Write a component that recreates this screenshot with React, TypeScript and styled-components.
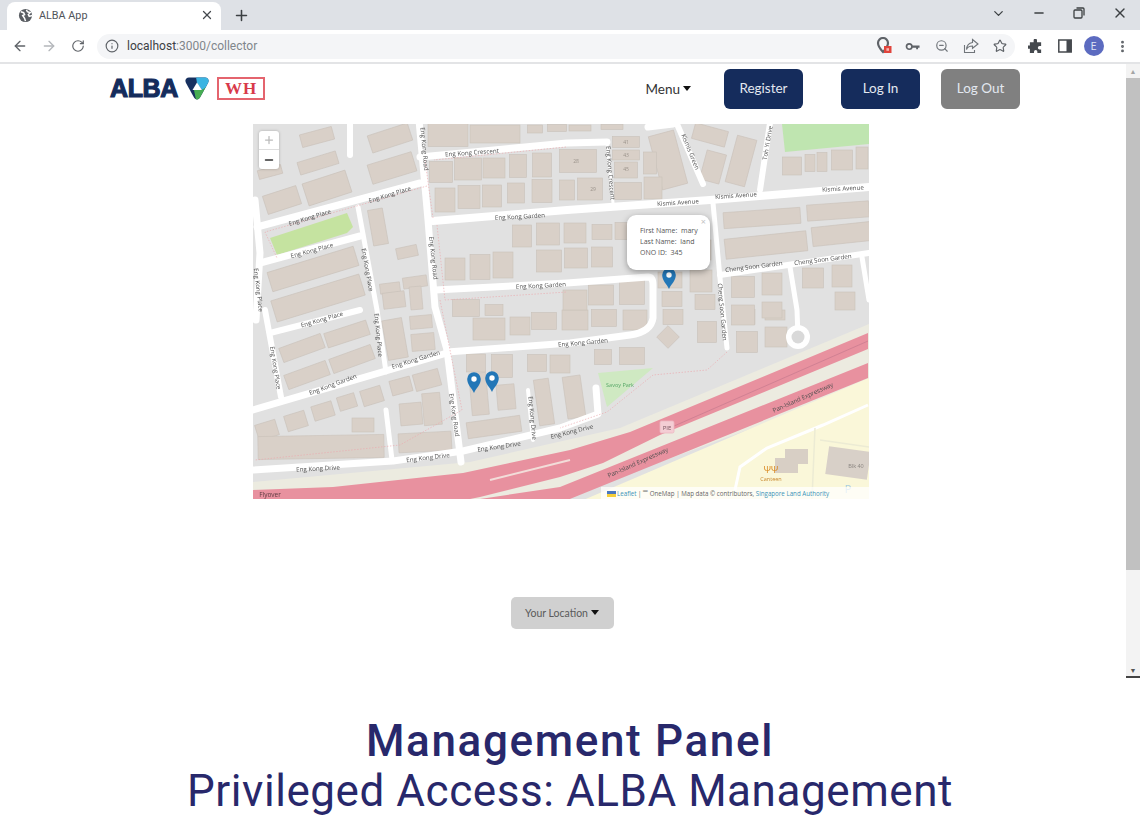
import React from "react";
import styled, { createGlobalStyle } from "styled-components";
import { ArrowLeft, ArrowRight, RotateCw, Info, X, Plus, Minus, ChevronDown, ZoomOut, Star, MoreVertical } from "lucide-react";

const Global = createGlobalStyle`
  html, body { margin: 0; padding: 0; background: #fff; overflow: hidden; }
  #root { width: 1140px; height: 822px; }
  * { box-sizing: border-box; }
`;
const Page = styled.div`width:1140px;height:822px;overflow:hidden;display:flex;flex-direction:column;font-family:"Noto Sans",sans-serif;background:#fff;`;
const TabStrip = styled.div`height:30px;background:#dee1e6;display:flex;align-items:flex-end;padding-left:7px;`;
const Tab = styled.div`width:214px;height:28px;background:#fff;border-radius:8px 8px 0 0;display:flex;align-items:center;padding:0 7px 2px 11px;gap:6px;color:#45494e;font-size:11px;`;
const TabTitle = styled.span`flex:1;font-family:"Roboto",sans-serif;font-size:10.8px;color:#50545a;`;
const NewTab = styled.div`width:40px;height:30px;display:flex;align-items:center;justify-content:center;color:#3c4043;`;
const WindowControls = styled.div`margin-left:auto;display:flex;height:30px;padding-bottom:4px;`;
const WindowButton = styled.div`width:40.5px;display:flex;align-items:center;justify-content:center;color:#3c4043;`;
const Toolbar = styled.div`height:34px;padding:2px 0 2px 5px;display:flex;align-items:center;background:#fff;border-bottom:2px solid #e3e4e6;`;
const ToolIcon = styled.div<{ $muted?: boolean; $first?: boolean }>`width:29px;height:28px;flex:none;display:flex;align-items:center;justify-content:center;margin-left:${p => (p.$first ? "6px" : "0")};color:${p => (p.$muted ? "#b4b7bb" : "#5f6368")};`;
const Omnibox = styled.div`margin-left:5px;width:918px;height:25px;border-radius:13px;background:#f4f5f7;display:flex;align-items:center;padding-left:8px;gap:8px;color:#5f6368;`;
const Url = styled.span`font-family:"Roboto",sans-serif;font-size:12px;color:#80868b;`;
const Host = styled.span`color:#3c4043;`;
const OmniActions = styled.div`margin-left:auto;display:flex;padding-right:1px;`;
const Avatar = styled.div`width:20px;height:20px;border-radius:50%;background:#5c6bc0;color:#dfe3f5;font-size:10px;display:flex;align-items:center;justify-content:center;font-family:"Roboto",sans-serif;`;
const Viewport = styled.div`height:614px;display:flex;flex:none;`;
const Content = styled.main`width:1126px;display:flex;flex-direction:column;align-items:center;`;
const Scrollbar = styled.div`width:14px;background:#f3f3f3;display:flex;flex-direction:column;align-items:center;border-bottom:2px solid #444;`;
const ScrollArrow = styled.div`height:14px;display:flex;align-items:center;justify-content:center;font-size:7px;color:#a5a5a5;`;
const ScrollArrowDown = styled(ScrollArrow)`color:#555;height:12px;`;
const Thumb = styled.div`width:14px;height:492px;background:#c1c1c1;`;
const ScrollRest = styled.div`flex:1;`;
const Nav = styled.nav`width:100%;display:flex;align-items:center;padding:5px 106px 0 110px;`;
const Logo = styled.div`display:flex;align-items:center;margin-top:-2px;`;
const LogoWord = styled.span`font-family:"Liberation Sans",sans-serif;font-weight:700;font-size:25px;letter-spacing:-.4px;color:#142c5c;-webkit-text-stroke:1.2px #142c5c;width:75px;white-space:nowrap;`;
const WhBox = styled.div`margin-left:8px;width:48px;height:23px;border:2px solid #e4646e;padding-top:1px;display:flex;align-items:center;justify-content:center;font-family:"Liberation Serif",serif;font-weight:700;font-size:17px;letter-spacing:.8px;color:#d83a4a;`;
const MenuLink = styled.div`margin-left:auto;color:#333;font-family:"Lato",sans-serif;font-size:13.5px;display:flex;align-items:center;gap:3px;padding-bottom:1px;`;
const Caret = styled.span`display:inline-block;width:0;height:0;border-left:4.5px solid transparent;border-right:4.5px solid transparent;border-top:5px solid #111;`;
const NavButton = styled.button<{ $grey?: boolean; $left: number }>`margin-left:${p => p.$left}px;width:79px;height:40px;border:none;border-radius:6px;background:${p => (p.$grey ? "#808080" : "#152c5c")};color:#e3e8f0;font-family:"Lato",sans-serif;font-size:13.5px;padding:0 0 2px;`;
const MapFrame = styled.div`position:relative;margin:15px 4px 0 0;width:616px;height:375px;overflow:hidden;flex:none;background:#e0e0e0;`;
const MapSvg = styled.svg`display:block;filter:blur(.45px);`;
const ZoomBox = styled.div`position:absolute;left:6px;top:7px;width:20px;height:38px;background:#fff;border-radius:3px;box-shadow:0 0 3px rgba(0,0,0,.25);display:flex;flex-direction:column;`;
const ZoomCell = styled.div<{ $off?: boolean }>`height:19px;display:flex;align-items:center;justify-content:center;color:${p => (p.$off ? "#bbb" : "#333")};border-bottom:${p => (p.$off ? "1px solid #ddd" : "none")};`;
const Popup = styled.div`position:absolute;left:374px;top:91px;width:83px;height:55px;background:#fff;border-radius:9px;box-shadow:0 2px 6px rgba(0,0,0,.35);padding:10px 0 0 13px;font-family:"Open Sans",sans-serif;font-size:7px;line-height:11px;color:#555;`;
const PopupClose = styled.span`position:absolute;right:4px;top:1px;font-size:9px;color:#c3c3c3;`;
const Attribution = styled.div`position:absolute;right:0;bottom:0;width:268px;height:12px;padding-left:6px;background:rgba(255,255,255,.72);font-family:"Open Sans",sans-serif;font-size:6.2px;line-height:13px;color:#666;white-space:nowrap;`;
const AttrLink = styled.span`color:#3b93b8;`;
const Flag = styled.span`display:inline-block;width:9px;height:6px;margin-right:1px;vertical-align:-.5px;background:linear-gradient(#4a78c0 50%,#f5cf3a 50%);`;
const LocationButton = styled.button`margin:98px 2px 0 0;width:103px;height:32px;background:#d0d0d0;border:none;border-radius:5px;color:#5a5a5a;font-family:"Lato",sans-serif;font-size:10.5px;display:flex;align-items:center;justify-content:center;gap:3px;padding:0 0 1px;`;
const Headings = styled.section`flex:1;display:flex;flex-direction:column;align-items:center;padding-top:38px;color:#28286b;font-family:"Roboto",sans-serif;`;
const Title = styled.h1`margin:0;font-weight:500;font-size:44px;line-height:50px;letter-spacing:1.65px;white-space:nowrap;`;
const Subtitle = styled.h2`margin:0;font-weight:400;font-size:44px;line-height:50px;letter-spacing:.56px;white-space:nowrap;`;

type R = [number, number, number, number, number?];
// buildings: centre x, centre y, width, height, rotation
const B: R[] = [
  [317,137,33,13,-15],[318,163,40,13,-17],[390,138,42,18,-18],[392,168,46,20,-17],[327,188,45,23,-18],[282,200,35,19,-18],[270,172,24,9,-15],
  [448,135,40,23],[495,134,50,18],[535,129,15,8],[557,128,19,7],[580,128,22,6],[612,127,22,5],
  [441,172,23,21],[468,169,27,22],[494,168,22,20],[518,166,17,23],[542,165,19,24],[578,161,37,23],
  [445,200,20,24],[469,197,22,23],[492,196,19,22],[516,193,17,20],[542,191,20,23],[567,190,15,20],[590,189,25,22],
  [378,227,15,36,-10],[407,252,21,11,-12],[522,236,19,22],[548,234,23,22],[575,233,22,20],[602,232,20,15],[627,231,24,17],
  [549,261,25,22],[576,258,23,20],[602,257,21,20],[455,269,20,22],[480,267,20,25],[503,265,20,26],
  [313,269,90,20,-17],[318,298,92,22,-17],[390,288,20,10,-7],[394,300,22,16,-7],[415,282,24,11,-8],[416,298,12,23,-5],
  [302,348,44,15,-20],[347,334,44,15,-18],[307,375,44,15,-20],[352,359,44,15,-20],[395,339,20,40,-10],[421,322,22,13,-5],[423,342,23,17,-5],
  [401,386,21,15,-15],[427,380,26,17,-15],[372,396,21,16,-17],[347,402,18,14,-17],[323,411,21,15,-17],[296,421,21,16,-17],[267,430,21,16,-17],
  [363,425,22,14],[321,447,126,23,-1],[425,442,53,19,-3],[411,414,22,22,-5],[432,409,18,32,-5],
  [476,363,19,18],[479,394,17,42,-5],[502,366,21,23],[506,397,18,25,-5],[494,427,54,16,-8],[544,402,15,46,-8],[537,363,19,17],[560,364,20,18],[574,397,18,42,-8],
  [489,329,32,22],[520,326,20,18],[544,321,25,17],[466,308,27,17],[494,310,18,11],
  [575,320,26,20],[604,318,25,17],[635,320,24,20],[673,317,20,15],[668,337,16,16,45],[707,332,19,21],[745,317,20,15],[747,342,21,21],[775,315,20,10],[776,337,22,20],
  [603,357,17,15],[632,356,25,17],
  [626,142,27,11],[626,155,27,10],[626,170,23,16],[628,191,27,17],
  [668,160,26,55,-15],[650,163,13,22],[653,188,18,22],[713,167,20,30,15],[741,161,20,48,15],[710,135,34,16,15],
  [792,166,19,18],[810,163,10,17],[822,162,10,19],[842,160,21,20],[862,158,12,22],
  [762,218,77,16,-4],[838,211,62,16,-4],[766,245,82,20,-6],[842,234,60,19,-6],
  [743,287,23,21],[772,284,20,22],[813,278,21,20],[842,276,20,22],[845,301,20,18],[743,315,23,20],[772,310,20,16],
  [670,280,24,16],[672,299,20,15],[701,281,22,22],[705,302,20,15],[601,295,25,20],[632,292,25,25],[575,300,24,20],
  [668,260,16,14],[700,250,22,20],
];
const labels: [string, number, number, number][] = [
  ["Eng Kong Crescent",472,153,-4],["Eng Kong Garden",520,217,-3],["Eng Kong Garden",541,286,-3],["Eng Kong Place",310,218,-17],["Eng Kong Place",390,195,-17],["Eng Kong Place",312,251,-15],
  ["Eng Kong Road",433,258,84],["Eng Kong Place",367,270,80],["Eng Kong Place",258,290,83],["Eng Kong Place",378,335,85],["Eng Kong Place",275,368,81],["Eng Kong Place",322,320,-16],
  ["Eng Kong Garden",333,385,-20],["Eng Kong Garden",416,360,-17],["Eng Kong Road",454,415,82],["Eng Kong Road",424,149,85],["Eng Kong Drive",318,469,-3],["Eng Kong Drive",428,458,-7],["Eng Kong Drive",499,447,-8],["Eng Kong Drive",572,432,-14],["Eng Kong Drive",532,418,85],
  ["Eng Kong Garden",583,343,-5],["Cheng Soon Garden",754,267,-7],["Cheng Soon Garden",823,260,-7],["Cheng Soon Garden",722,312,85],["Kismis Avenue",678,203,-4],["Kismis Avenue",736,196,-4],["Kismis Avenue",843,189,-3],
  ["Eng Kong Crescent",610,173,85],["Kismis Green",690,152,68],["Toh Yi Drive",768,143,-80],["Pan-Island Expressway",803,398,-24],["Pan-Island Expressway",638,463,-24],
];
const roads: [string, number][] = [
  ["M419 120L428 220L435 307L447 350L461 462",7],["M420 157L567 143L607 142",7],["M607 143L613 203",3],["M433 221L567 210L710 200L869 187",8],
  ["M435 290L567 283L648 277Q653 277 653 285L653 318Q651 332 630 335L570 343L447 352",7],["M253 410L447 353",7],["M257 227L420 183",7],["M260 263L360 236",7],["M358 207L377 310L386 372",5],
  ["M265 310L281 397",6],["M270 333L360 310",6],["M255 200L260 253L256 320",7],["M253 470L393 461L463 451L560 428L598 414L596 388",7],["M386 410L392 460",5],["M528 390L533 440",4],
  ["M677 124L703 184",6],["M770 123L760 190",6],["M713 203L723 310L727 348",5],["M720 275L869 253",6],["M790 267L797 310L798 337",5],["M862 257L869 300",5],["M648 127L673 124",7],["M350 120L350 155",6],
];

const Pin = ({ x, y }: { x: number; y: number }) => (
  <g transform={`translate(${x} ${y})`}>
    <path d="M0 0C-2-5-6.8-8-6.8-14A6.8 6.8 0 1 1 6.8-14C6.8-8 2-5 0 0Z" fill="#2377b7" />
    <circle cy={-14} r={2.7} fill="#fff" />
  </g>
);

const MapDrawing = () => (
  <MapSvg width={616} height={375} viewBox="253 124 616 375">
    <rect x={253} y={124} width={616} height={375} fill="#e1e1e1" />
    <path d="M253 482L470 462L620 428L869 324V385L560 499H253Z" fill="#ecebe0" />
    <path d="M560 510L869 378V510Z" fill="#faf7d9" />
    <path d="M782 124H869V144L785 152Z" fill="#bfe5b0" />
    <path d="M270 238L347 213L353 227L347 233L277 255Z" fill="#c5e3a0" />
    <path d="M598 373L653 368L607 407Z" fill="#cfe9c2" />
    {B.map(([x, y, w, h, a], i) => (
      <rect key={i} x={x - w / 2} y={y - h / 2} width={w} height={h} fill="#d9d0c8" stroke="#c9c1b9" strokeWidth={0.6} transform={a ? `rotate(${a} ${x} ${y})` : undefined} />
    ))}
    {roads.map(([d, w], i) => (
      <path key={i} d={d} fill="none" stroke="#fff" strokeWidth={w} strokeLinecap="round" strokeLinejoin="round" />
    ))}
    <circle cx={798} cy={337} r={12} fill="#fff" />
    <circle cx={798} cy={337} r={6.5} fill="#d9d9d9" />
    <g fill="none" stroke="#eba9ae" strokeWidth={1} strokeDasharray="1.5 1.5" opacity={0.65}>
      <path d="M427 186L265 232L277 258M425 160L433 218M566 147L434 160M437 225L445 300L567 292" />
      <path d="M727 352L707 370L653 375L607 412L560 428" />
      <path d="M440 300L462 410L400 445L255 460" />
    </g>
    <path d="M253 490L333 487L463 473L570 450L630 432L868 333V349L660 435L603 463L560 477L480 497L470 499H253Z" fill="#e8919f" />
    <path d="M480 499L560 487L868 363V378L560 503Z" fill="#e8919f" />
    <path d="M490 480L570 460" stroke="#f2ddd9" strokeWidth={2} fill="none" />
    <path d="M665 430L868 341" stroke="#c67a8e" strokeWidth={.7} fill="none" />
    <path d="M868 405L823 425L767 448L740 467L735 490" stroke="#fff" strokeWidth={3} fill="none" />
    <path d="M815 428L812 499M820 440L869 447" stroke="#ecebd4" strokeWidth={1.5} fill="none" />
    <path d="M775 458H785V449H808V464H798V473H775Z" fill="#d8cfc5" />
    <rect x={827} y={449} width={42} height={28} fill="#d8d0c8" transform="rotate(8 848 463)" />
    <g fontFamily="'Open Sans',sans-serif" fontSize={6.2} fill="#4f4f4f" textAnchor="middle">
      {labels.map(([t, x, y, a], i) => (
        <text key={i} x={x} y={y} transform={`rotate(${a} ${x} ${y})`} dominantBaseline="middle">{t}</text>
      ))}
      <text x={620} y={387} fill="#58a868" fontSize={5.5}>Savoy Park</text>
      <text x={771} y={481} fill="#c8872c" fontSize={5.5}>Canteen</text>
      <text x={771} y={473} fill="#d8861c" fontSize={9}>ΨΨ</text>
      <text x={856} y={468} fill="#8a8580" fontSize={5.5}>Blk 40</text>
      <text x={576} y={163} fill="#9a928a" fontSize={5}>28</text>
      <text x={593} y={191} fill="#9a928a" fontSize={5}>29</text>
      <text x={626} y={144} fill="#9a928a" fontSize={5}>41</text>
      <text x={626} y={157} fill="#9a928a" fontSize={5}>43</text>
      <text x={626} y={171} fill="#9a928a" fontSize={5}>45</text>
      <text x={270} y={497} fontSize={6.5} fill="#5c3a40">Flyover</text>
      <text x={848} y={493} fontSize={11} fill="#a8cde0">P</text>
    </g>
    <rect x={660} y={421} width={14} height={12} rx={1.5} fill="#f4cdd4" stroke="#eeb6c0" strokeWidth={.8} />
    <text x={667} y={429.5} fontSize={6} fontFamily="'Open Sans',sans-serif" fill="#7a5560" textAnchor="middle">PIE</text>
    <Pin x={474} y={393} />
    <Pin x={492} y={392} />
    <Pin x={669} y={289} />
  </MapSvg>
);

const Globe = () => (
  <svg width="15" height="15" viewBox="0 0 16 16"><circle cx="8" cy="8" r="7" fill="#5a5e63" /><path d="M3 4l3 1 1 2-2 1 2 3 1 3M9 2l1 2 3 1-2 2 1 2 3-1" fill="none" stroke="#fff" strokeWidth="1.6" /></svg>
);
const Blocked = () => (
  <svg width="16" height="18" viewBox="0 0 16 18"><path d="M7 1a5 5 0 0 0-5 5c0 3.6 5 9 5 9s5-5.4 5-9a5 5 0 0 0-5-5z" fill="none" stroke="#5f6368" strokeWidth="2.2" /><rect x="8" y="9" width="7.5" height="7" fill="#e0443c" /><rect x="10.4" y="11.2" width="2.6" height="2.6" fill="#f7b7b0" /></svg>
);
const KeyIcon = () => (
  <svg width="15" height="15" viewBox="0 0 16 16"><circle cx="4.5" cy="8" r="2.9" fill="none" stroke="#5f6368" strokeWidth="1.8" /><path d="M7.5 7h8v2.2h-1.6v1.6h-2V9.2H7.5z" fill="#5f6368" /></svg>
);
const ShareIcon = () => (
  <svg width="16" height="16" viewBox="0 0 16 16" fill="none" stroke="#70757a" strokeWidth="1.1"><path d="M1.5 7v7.5h10V12" /><path d="M9.5 1.5L15 6l-5.500 4.300V8C6.500 8 4.500 9 3.500 11.500c.3-4 2.500-6.500 6-7z" /></svg>
);
const Puzzle = () => (
  <svg width="15" height="15" viewBox="0 0 16 16"><path d="M6 1.500a1.800 1.800 0 0 1 3.600 0V3.500H14v4h-1.700a1.800 1.800 0 0 0 0 3.600H14V15H10v-1.500a1.800 1.800 0 0 0-3.600 0V15H2v-4.500H.8a1.800 1.800 0 0 1 0-3.600H2V3.500h4z" fill="#45494e" /></svg>
);
const SidePanel = () => (
  <svg width="14" height="14" viewBox="0 0 14 14"><rect x=".8" y="1" width="12.400" height="12" fill="none" stroke="#45494e" strokeWidth="1.500" /><rect x="8.500" y="1" width="4.700" height="12" fill="#45494e" /></svg>
);
const Restore = () => (
  <svg width="12" height="12" viewBox="0 0 12 12" fill="none" stroke="#3c4043" strokeWidth="1.300"><rect x="1" y="3" width="8" height="8" rx="1" /><path d="M3.500 1h6.500a1 1 0 0 1 1 1v6.500" /></svg>
);
const Shield = () => (
  <svg width="24" height="23" viewBox="0 0 24 23">
    <defs>
      <clipPath id="shieldOutline"><path d="M4 .5H20C23 .5 24.500 3 23 6L15 20.500C13.500 23 10.500 23 9 20.500L1 6C-.5 3 1 .5 4 .5Z" /></clipPath>
    </defs>
    <g clipPath="url(#shieldOutline)">
      <rect width="24" height="23" fill="#17305f" />
      <path d="M11 0H24V9L17 13L12 6Z" fill="#3cb4e2" />
      <path d="M9 13H17L24 8V23H11Z" fill="#46ad52" />
      <path d="M12 5.500L17 13H7.500Z" fill="#fff" />
    </g>
  </svg>
);

export default function App() {
  return (
    <Page>
      <Global />
      <TabStrip>
        <Tab>
          <Globe />
          <TabTitle>ALBA App</TabTitle>
          <X size={14} strokeWidth={2.2} />
        </Tab>
        <NewTab><Plus size={17} strokeWidth={2.2} /></NewTab>
        <WindowControls>
          <WindowButton><ChevronDown size={15} /></WindowButton>
          <WindowButton><Minus size={14} strokeWidth={2.4} /></WindowButton>
          <WindowButton><Restore /></WindowButton>
          <WindowButton><X size={16} /></WindowButton>
        </WindowControls>
      </TabStrip>
      <Toolbar>
        <ToolIcon><ArrowLeft size={16} /></ToolIcon>
        <ToolIcon $muted><ArrowRight size={16} /></ToolIcon>
        <ToolIcon><RotateCw size={14} strokeWidth={2} /></ToolIcon>
        <Omnibox>
          <Info size={14} />
          <Url><Host>localhost</Host>:3000/collector</Url>
          <OmniActions>
            <ToolIcon><Blocked /></ToolIcon>
            <ToolIcon><KeyIcon /></ToolIcon>
            <ToolIcon $muted><ZoomOut size={14} color="#70757a" /></ToolIcon>
            <ToolIcon><ShareIcon /></ToolIcon>
            <ToolIcon><Star size={14} strokeWidth={2} /></ToolIcon>
          </OmniActions>
        </Omnibox>
        <ToolIcon $first><Puzzle /></ToolIcon>
        <ToolIcon><SidePanel /></ToolIcon>
        <ToolIcon><Avatar>E</Avatar></ToolIcon>
        <ToolIcon><MoreVertical size={15} strokeWidth={2.6} /></ToolIcon>
      </Toolbar>
      <Viewport>
        <Content>
          <Nav>
            <Logo>
              <LogoWord>ALBA</LogoWord>
              <Shield />
              <WhBox>WH</WhBox>
            </Logo>
            <MenuLink>Menu <Caret /></MenuLink>
            <NavButton $left={33}>Register</NavButton>
            <NavButton $left={38}>Log In</NavButton>
            <NavButton $left={21} $grey>Log Out</NavButton>
          </Nav>
          <MapFrame>
            <MapDrawing />
            <ZoomBox>
              <ZoomCell $off><Plus size={12} strokeWidth={2.5} /></ZoomCell>
              <ZoomCell><Minus size={12} strokeWidth={3} /></ZoomCell>
            </ZoomBox>
            <Popup>
              <PopupClose>×</PopupClose>
              First Name:&nbsp; mary<br />Last Name:&nbsp; land<br />ONO ID:&nbsp; 345
            </Popup>
            <Attribution>
              <Flag /><AttrLink>Leaflet</AttrLink> | ▔ OneMap | Map data © contributors, <AttrLink>Singapore Land Authority</AttrLink>
            </Attribution>
          </MapFrame>
          <LocationButton>Your Location <Caret /></LocationButton>
        </Content>
        <Scrollbar>
          <ScrollArrow>▲</ScrollArrow>
          <Thumb />
          <ScrollRest />
          <ScrollArrowDown>▼</ScrollArrowDown>
        </Scrollbar>
      </Viewport>
      <Headings>
        <Title>Management Panel</Title>
        <Subtitle>Privileged Access: ALBA Management</Subtitle>
      </Headings>
    </Page>
  );
}
